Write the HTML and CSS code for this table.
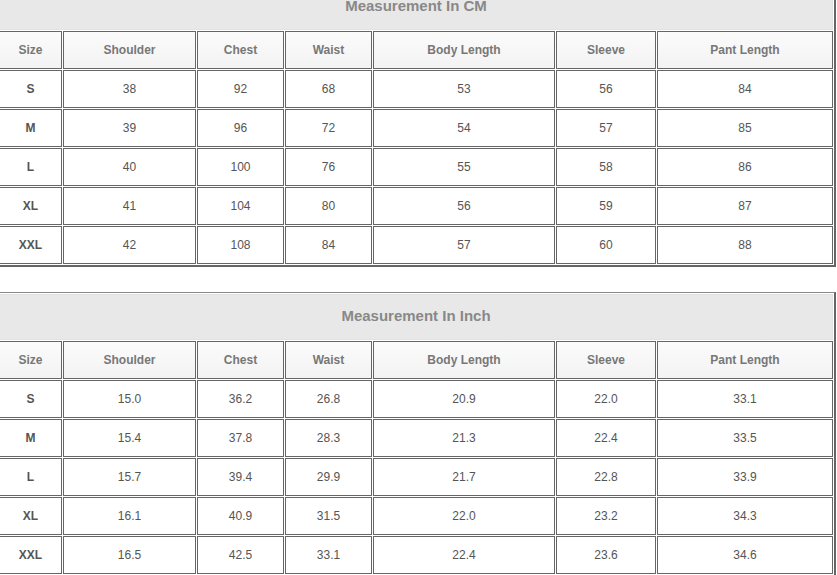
FILE: index.html
```html
<!DOCTYPE html>
<html>
<head>
<meta charset="utf-8">
<link rel="stylesheet" href="styles.css">
</head>
<body>
<div class="page">
  <table class="size-table first">
    <tr><td class="title" colspan="7">Measurement In CM</td></tr>
    <tr class="head">
      <th class="c-size">Size</th><th class="c-sh">Shoulder</th><th class="c-ch">Chest</th><th class="c-wa">Waist</th><th class="c-bl">Body Length</th><th class="c-sl">Sleeve</th><th class="c-pl">Pant Length</th>
    </tr>
    <tr><td class="sz">S</td><td>38</td><td>92</td><td>68</td><td>53</td><td>56</td><td>84</td></tr>
    <tr><td class="sz">M</td><td>39</td><td>96</td><td>72</td><td>54</td><td>57</td><td>85</td></tr>
    <tr><td class="sz">L</td><td>40</td><td>100</td><td>76</td><td>55</td><td>58</td><td>86</td></tr>
    <tr><td class="sz">XL</td><td>41</td><td>104</td><td>80</td><td>56</td><td>59</td><td>87</td></tr>
    <tr><td class="sz">XXL</td><td>42</td><td>108</td><td>84</td><td>57</td><td>60</td><td>88</td></tr>
  </table>
  <table class="size-table second">
    <tr><td class="title" colspan="7">Measurement In Inch</td></tr>
    <tr class="head">
      <th class="c-size">Size</th><th class="c-sh">Shoulder</th><th class="c-ch">Chest</th><th class="c-wa">Waist</th><th class="c-bl">Body Length</th><th class="c-sl">Sleeve</th><th class="c-pl">Pant Length</th>
    </tr>
    <tr><td class="sz">S</td><td>15.0</td><td>36.2</td><td>26.8</td><td>20.9</td><td>22.0</td><td>33.1</td></tr>
    <tr><td class="sz">M</td><td>15.4</td><td>37.8</td><td>28.3</td><td>21.3</td><td>22.4</td><td>33.5</td></tr>
    <tr><td class="sz">L</td><td>15.7</td><td>39.4</td><td>29.9</td><td>21.7</td><td>22.8</td><td>33.9</td></tr>
    <tr><td class="sz">XL</td><td>16.1</td><td>40.9</td><td>31.5</td><td>22.0</td><td>23.2</td><td>34.3</td></tr>
    <tr><td class="sz">XXL</td><td>16.5</td><td>42.5</td><td>33.1</td><td>22.4</td><td>23.6</td><td>34.6</td></tr>
  </table>
</div>
</body>
</html>
```
FILE: styles.css
```css
html, body {
  margin: 0;
  padding: 0;
  background: #ffffff;
  overflow: hidden;
}
.page {
  margin-top: -18px;
  margin-left: -2px;
  font-family: "Liberation Sans", Arial, sans-serif;
}
.size-table {
  border-collapse: separate;
  border-spacing: 1px;
  border-top: 1px solid #8a8a8a;
  border-right: 2px solid #666;
  border-bottom: 2px solid #666;
  border-left: 0;
  font-size: 12px;
}
.size-table.second {
  margin-top: 25px;
}
.size-table td,
.size-table th {
  box-sizing: border-box;
  border: 1px solid #666;
  height: 38px;
  padding: 0;
  text-align: center;
  vertical-align: middle;
  color: #555;
  font-weight: normal;
  background: #fff;
}
.size-table td.title {
  height: 46px;
  padding-bottom: 3px;
  background: #e8e8e8;
  border: 1px solid #e2e2e2;
  color: #888;
  font-size: 15px;
  font-weight: bold;
}
.size-table .head th {
  background: linear-gradient(#fbfbfb, #f3f3f3);
  color: #777;
  font-weight: bold;
}
.size-table td.sz {
  font-weight: bold;
  color: #555;
}
.c-size { width: 63px; }
.c-sh { width: 133px; }
.c-ch { width: 87px; }
.c-wa { width: 87px; }
.c-bl { width: 182px; }
.c-sl { width: 100px; }
.c-pl { width: 176px; }
```
